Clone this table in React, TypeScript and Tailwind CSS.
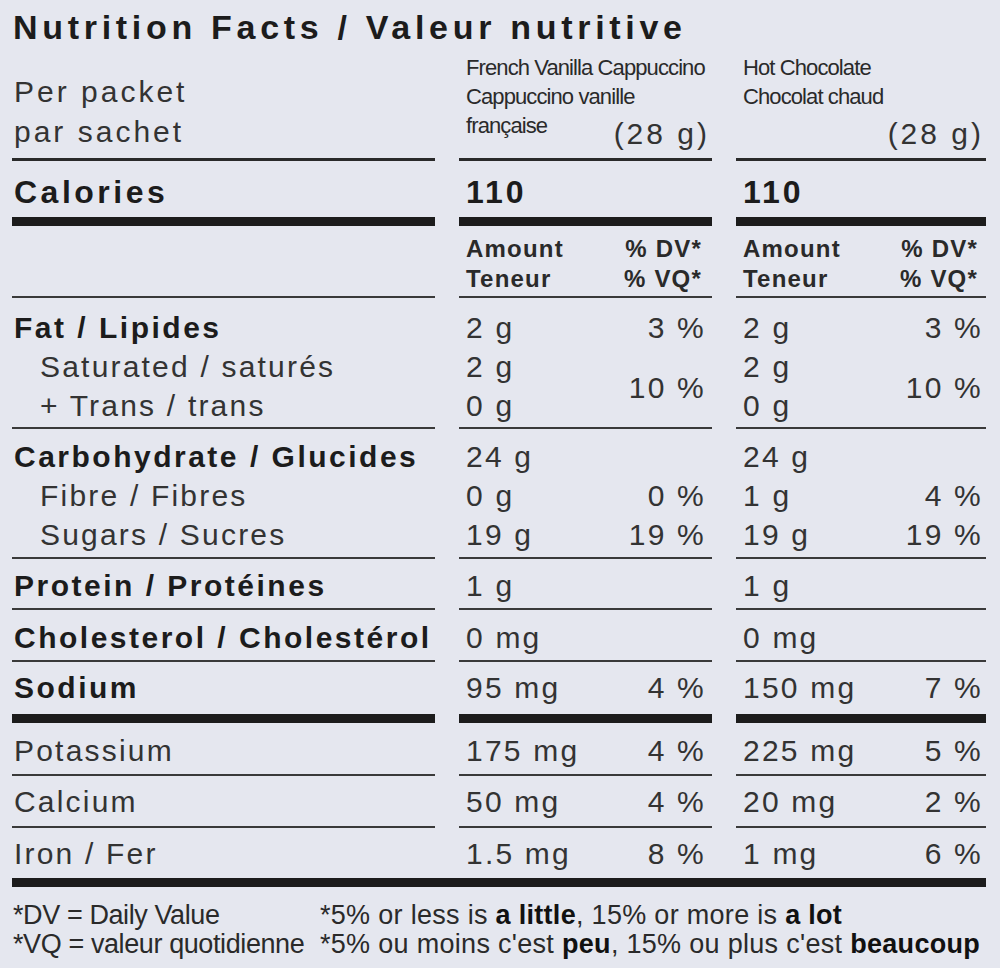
import React from "react";

const thin = "border-b-2 border-[#3a3a3a]";
const thick = "border-b-[9px] border-[#1c1c1c]";

type Label = { t: string; bold?: boolean; sub?: boolean };
type Line = [string, string?];

const LabelCell = ({ items, cls }: { items: Label[]; cls: string }) => (
  <div className={`pl-[2px] ${cls}`}>
    {items.map((it) => (
      <div
        key={it.t}
        className={
          it.bold
            ? "text-[30px] leading-[39px] font-bold tracking-[2.5px] text-[#1c1c1c] whitespace-nowrap"
            : `text-[30px] leading-[39px] tracking-[2.2px] text-[#333] whitespace-nowrap ${it.sub ? "pl-[26px]" : ""}`
        }
      >
        {it.t}
      </div>
    ))}
  </div>
);

const ValueCell = ({ lines, cls, pr }: { lines: Line[]; cls: string; pr: string }) => (
  <div className={`pl-[7px] ${pr} ${cls}`}>
    {lines.map(([amt, dv], i) => (
      <div key={i} className="flex justify-between text-[30px] leading-[39px] tracking-[2.2px] text-[#333] whitespace-nowrap">
        <span>{amt}</span>
        {dv && <span>{dv}</span>}
      </div>
    ))}
  </div>
);

const FatCell = ({ top, merged, cls, pr }: { top: string; merged: string; cls: string; pr: string }) => (
  <div className={`pl-[7px] ${pr} ${cls} flex justify-between text-[30px] leading-[39px] tracking-[2.2px] text-[#333]`}>
    <div>
      <div>2 g</div>
      <div>2 g</div>
      <div>0 g</div>
    </div>
    <div className="flex flex-col items-end">
      <div>{top}</div>
      <div className="flex flex-1 items-center">{merged}</div>
    </div>
  </div>
);

type Sec = { left: Label[]; a: Line[]; b: Line[]; h: string; pt: string; border: string };

const sections: Sec[] = [
  { left: [{ t: "Protein / Protéines", bold: true }], a: [["1 g"]], b: [["1 g"]], h: "h-[51px]", pt: "pt-[7px]", border: thin },
  { left: [{ t: "Cholesterol / Cholestérol", bold: true }], a: [["0 mg"]], b: [["0 mg"]], h: "h-[52px]", pt: "pt-[8px]", border: thin },
  { left: [{ t: "Sodium", bold: true }], a: [["95 mg", "4 %"]], b: [["150 mg", "7 %"]], h: "h-[61px]", pt: "pt-[6px]", border: thick },
  { left: [{ t: "Potassium" }], a: [["175 mg", "4 %"]], b: [["225 mg", "5 %"]], h: "h-[53px]", pt: "pt-[8px]", border: thin },
  { left: [{ t: "Calcium" }], a: [["50 mg", "4 %"]], b: [["20 mg", "2 %"]], h: "h-[52px]", pt: "pt-[6px]", border: thin },
  { left: [{ t: "Iron / Fer" }], a: [["1.5 mg", "8 %"]], b: [["1 mg", "6 %"]], h: "h-[50px]", pt: "pt-[6px]", border: "" },
];

const ProductHead = ({ l1, l2, l3, pr }: { l1: string; l2: string; l3: string; pr: string }) => (
  <div className={`h-[114px] border-b-[3px] border-[#2a2a2a] pt-[6px] pl-[7px] ${pr}`}>
    <div className="text-[22px] leading-[29px] tracking-[-0.9px] text-[#2a2a2a] whitespace-nowrap">{l1}</div>
    <div className="text-[22px] leading-[29px] tracking-[-0.9px] text-[#2a2a2a] whitespace-nowrap">{l2}</div>
    <div className="flex justify-between items-start">
      <span className="text-[22px] leading-[29px] tracking-[-0.9px] text-[#2a2a2a]">{l3}</span>
      <span className="mt-[5px] text-[30px] leading-[36px] tracking-[3px] text-[#333]">(28 g)</span>
    </div>
  </div>
);

const AmountHead = ({ pr }: { pr: string }) => (
  <div className={`h-[72px] ${thin} pt-[8px] pl-[7px] ${pr} text-[24px] leading-[30px] font-bold tracking-[1.2px] text-[#2a2a2a]`}>
    <div className="flex justify-between"><span>Amount</span><span>% DV*</span></div>
    <div className="flex justify-between"><span>Teneur</span><span>% VQ*</span></div>
  </div>
);

export default function App() {
  const pa = "pr-[6px]";
  const pb = "pr-[3px]";
  return (
    <div className="w-[1000px] h-[968px] bg-[#e5e7ef] px-[12px] font-['Liberation_Sans',Arial,sans-serif] overflow-hidden">
      <div className="h-[47px] pt-[7px] pl-[1px] text-[34px] leading-[40px] font-bold tracking-[4.7px] text-[#1c1c1c] whitespace-nowrap">
        Nutrition Facts / Valeur nutritive
      </div>

      <div className="grid grid-cols-[423px_253px_250px] gap-x-6 w-[974px]">
        {/* header */}
        <div className="h-[114px] border-b-[3px] border-[#2a2a2a] pl-[2px] pb-[6px] flex flex-col justify-end text-[30px] leading-[40px] tracking-[3px] text-[#333]">
          <div>Per packet</div>
          <div>par sachet</div>
        </div>
        <ProductHead l1="French Vanilla Cappuccino" l2="Cappuccino vanille" l3="française" pr="pr-[2px]" />
        <ProductHead l1="Hot Chocolate" l2="Chocolat chaud" l3="" pr="pr-[2px]" />

        {/* calories */}
        <div className={`h-[65px] ${thick} pt-[11px] pl-[2px] text-[32px] leading-[40px] font-bold tracking-[3.5px] text-[#1c1c1c]`}>Calories</div>
        <div className={`h-[65px] ${thick} pt-[11px] pl-[7px] text-[32px] leading-[40px] font-bold tracking-[3px] text-[#1c1c1c]`}>110</div>
        <div className={`h-[65px] ${thick} pt-[11px] pl-[7px] text-[32px] leading-[40px] font-bold tracking-[3px] text-[#1c1c1c]`}>110</div>

        {/* amount */}
        <div className={`h-[72px] ${thin}`}></div>
        <AmountHead pr="pr-[10px]" />
        <AmountHead pr="pr-[8px]" />

        {/* fat */}
        <LabelCell
          cls={`h-[131px] pt-[10px] ${thin}`}
          items={[{ t: "Fat / Lipides", bold: true }, { t: "Saturated / saturés", sub: true }, { t: "+ Trans / trans", sub: true }]}
        />
        <FatCell top="3 %" merged="10 %" cls={`h-[131px] pt-[10px] ${thin}`} pr={pa} />
        <FatCell top="3 %" merged="10 %" cls={`h-[131px] pt-[10px] ${thin}`} pr={pb} />

        {/* carbohydrate */}
        <LabelCell
          cls={`h-[130px] pt-[8px] ${thin}`}
          items={[{ t: "Carbohydrate / Glucides", bold: true }, { t: "Fibre / Fibres", sub: true }, { t: "Sugars / Sucres", sub: true }]}
        />
        <ValueCell cls={`h-[130px] pt-[8px] ${thin}`} pr={pa} lines={[["24 g"], ["0 g", "0 %"], ["19 g", "19 %"]]} />
        <ValueCell cls={`h-[130px] pt-[8px] ${thin}`} pr={pb} lines={[["24 g"], ["1 g", "4 %"], ["19 g", "19 %"]]} />

        {sections.map((s) => (
          <React.Fragment key={s.left[0].t}>
            <LabelCell cls={`${s.h} ${s.pt} ${s.border}`} items={s.left} />
            <ValueCell cls={`${s.h} ${s.pt} ${s.border}`} pr={pa} lines={s.a} />
            <ValueCell cls={`${s.h} ${s.pt} ${s.border}`} pr={pb} lines={s.b} />
          </React.Fragment>
        ))}
      </div>

      <div className="h-[9px] w-[974px] bg-[#1c1c1c]"></div>

      {/* footnote */}
      <div className="grid grid-cols-[307px_1fr] pt-[14px] pl-[1px] text-[27px] leading-[29px] tracking-[0.3px] text-[#2a2a2a] whitespace-nowrap">
        <div className="tracking-[-0.4px]">*DV = Daily Value</div>
        <div>
          *5% or less is <b className="text-[#111]">a little</b>, 15% or more is <b className="text-[#111]">a lot</b>
        </div>
        <div className="tracking-[-0.4px]">*VQ = valeur quotidienne</div>
        <div>
          *5% ou moins c'est <b className="text-[#111]">peu</b>, 15% ou plus c'est <b className="text-[#111]">beaucoup</b>
        </div>
      </div>
    </div>
  );
}
